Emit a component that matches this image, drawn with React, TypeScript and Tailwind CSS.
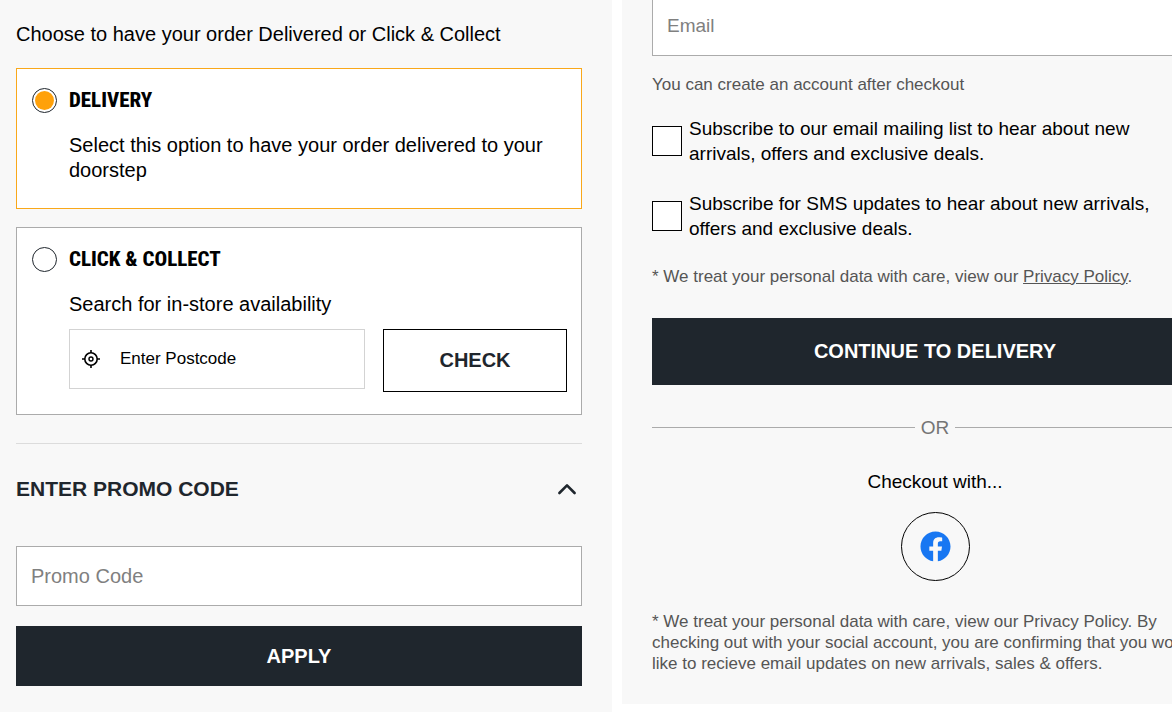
import { useState } from "react"
import type { ReactNode } from "react"
import { FaFacebook } from "react-icons/fa"
import clsx from "clsx"

const RADIO =
  "size-[25px] shrink-0 appearance-none rounded-full border border-[#1f262d] bg-white bg-clip-content p-0.5 checked:bg-[#ffa10a]"

const BUTTON_DARK =
  "block w-full bg-[#1f262d] text-center text-[20px] font-bold uppercase text-white"

function LocateIcon() {
  return (
    <svg viewBox="0 0 18 18" className="size-[18px]" fill="none" stroke="#000" aria-hidden="true">
      <circle cx="9" cy="9" r="6.2" strokeWidth="1.6" />
      <circle cx="9" cy="9" r="2" strokeWidth="1.4" />
      <path d="M9 0v3M9 15v3M0 9h3M15 9h3" strokeWidth="1.6" />
    </svg>
  )
}

function Chevron({ open }: { open: boolean }) {
  return (
    <svg
      viewBox="0 0 20 12"
      className={clsx("h-3 w-5", !open && "rotate-180")}
      fill="none"
      stroke="#1f262d"
      strokeWidth="2.6"
      strokeLinecap="round"
      strokeLinejoin="round"
      aria-hidden="true"
    >
      <path d="M2.4 10 10 2.4l7.6 7.6" />
    </svg>
  )
}

type OptionCardProps = {
  id: string
  title: string
  text: string
  checked: boolean
  onSelect: () => void
  className?: string
  children?: ReactNode
}

function OptionCard({ id, title, text, checked, onSelect, className, children }: OptionCardProps) {
  return (
    <div
      className={clsx(
        "border bg-white pl-[15px] pr-[14px] pt-[19px]",
        checked ? "border-[#f9a81a]" : "border-[#ababab]",
        className,
      )}
    >
      <div className="flex items-center gap-3">
        <input
          id={id}
          type="radio"
          name="fulfilment"
          checked={checked}
          onChange={onSelect}
          className={RADIO}
        />
        <label
          htmlFor={id}
          className="font-['Roboto_Condensed',Roboto,sans-serif] text-[21px] font-extrabold uppercase leading-[25px]"
        >
          {title}
        </label>
      </div>
      <div className="mt-5 pl-[37px]">
        <p>{text}</p>
        {children}
      </div>
    </div>
  )
}

function PromoCode() {
  const [open, setOpen] = useState(true)

  return (
    <section className="mt-7 border-t border-[#dcdcdc] pt-8">
      <h2>
        <button
          type="button"
          aria-expanded={open}
          onClick={() => setOpen(!open)}
          className="flex w-full items-center justify-between pr-[5px] text-[21px] font-bold uppercase leading-[25px] text-[#1f262d]"
        >
          Enter promo code
          <Chevron open={open} />
        </button>
      </h2>
      {open ? (
        <form className="mt-[45px]" onSubmit={(e) => e.preventDefault()}>
          <input
            type="text"
            aria-label="Promo Code"
            placeholder="Promo Code"
            className="block h-[60px] w-full border border-[#ababab] bg-white px-[14px] placeholder:text-[#808080]"
          />
          <button type="submit" className={clsx(BUTTON_DARK, "mt-5 h-[60px]")}>
            Apply
          </button>
        </form>
      ) : null}
    </section>
  )
}

function DeliveryPanel() {
  const [method, setMethod] = useState("delivery")

  return (
    <section className="min-h-screen bg-[#f8f8f8] px-[30px] pb-6 pt-[22px] text-[20px] leading-[25px]">
      <p>Choose to have your order Delivered or Click &amp; Collect</p>
      <OptionCard
        id="delivery"
        title="Delivery"
        text="Select this option to have your order delivered to your doorstep"
        checked={method === "delivery"}
        onSelect={() => setMethod("delivery")}
        className="mt-[21px] pb-[25px]"
      />
      <OptionCard
        id="collect"
        title="Click &amp; Collect"
        text="Search for in-store availability"
        checked={method === "collect"}
        onSelect={() => setMethod("collect")}
        className="mt-[18px] pb-[22px]"
      >
        <div className="mt-3 flex items-start gap-[18px]">
          <div className="flex h-[60px] min-w-0 flex-1 items-center gap-5 border border-[#d3d3d3] pl-3">
            <LocateIcon />
            <input
              type="text"
              aria-label="Enter Postcode"
              placeholder="Enter Postcode"
              className="h-full min-w-0 flex-1 text-[17px] placeholder:text-black"
            />
          </div>
          <button
            type="button"
            className="h-[63px] w-[184px] border border-black text-[20px] font-bold uppercase text-[#1f262d]"
          >
            Check
          </button>
        </div>
      </OptionCard>
      <PromoCode />
    </section>
  )
}

function SubscribeOption({ id, text }: { id: string; text: string }) {
  return (
    <div className="flex items-center gap-[7px]">
      <input
        id={id}
        type="checkbox"
        className="size-[30px] shrink-0 appearance-none border border-black bg-white checked:bg-[#1f262d]"
      />
      <label htmlFor={id} className="max-w-[485px]">
        {text}
      </label>
    </div>
  )
}

function GuestPanel() {
  return (
    <section className="-mt-1 self-start bg-[#f8f8f8] px-[30px] pb-[30px] text-[19px] leading-[25px]">
      <input
        type="email"
        aria-label="Email"
        placeholder="Email"
        className="block h-[60px] w-full border border-[#ababab] bg-white px-[14px] placeholder:text-[#808080]"
      />
      <p className="mt-[18px] text-[17px] leading-[21px] text-[#555]">
        You can create an account after checkout
      </p>
      <div className="mt-[21px] space-y-[25px]">
        <SubscribeOption
          id="email-list"
          text="Subscribe to our email mailing list to hear about new arrivals, offers and exclusive deals."
        />
        <SubscribeOption
          id="sms-list"
          text="Subscribe for SMS updates to hear about new arrivals, offers and exclusive deals."
        />
      </div>
      <p className="mt-[25px] text-[17px] leading-[21px] text-[#555]">
        * We treat your personal data with care, view our{" "}
        <a href="#privacy" className="underline">
          Privacy Policy
        </a>
        .
      </p>
      <button type="button" className={clsx(BUTTON_DARK, "mt-[31px] h-[67px]")}>
        Continue to delivery
      </button>
      <div className="mt-[30px] flex items-center text-[#757575]">
        <span className="h-px flex-1 bg-[#ababab]" />
        <span className="px-[6px]">OR</span>
        <span className="h-px flex-1 bg-[#ababab]" />
      </div>
      <p className="mt-[29px] text-center">Checkout with...</p>
      <button
        type="button"
        aria-label="Facebook"
        className="mx-auto mt-[18px] flex size-[69px] items-center justify-center rounded-full border border-black"
      >
        <FaFacebook className="size-[31px] text-[#1877f2]" />
      </button>
      <p className="mt-[30px] text-[17px] leading-[21px] text-[#555]">
        * We treat your personal data with care, view our Privacy Policy. By checking out with your
        social account, you are confirming that you would like to recieve email updates on new
        arrivals, sales &amp; offers.
      </p>
    </section>
  )
}

export default function App() {
  return (
    <main className="min-h-screen overflow-hidden bg-white font-['Liberation_Sans',Arial,sans-serif] text-black">
      <div className="-ml-[14px] -mr-[76px] grid grid-cols-2 gap-[10px]">
        <DeliveryPanel />
        <GuestPanel />
      </div>
    </main>
  )
}
